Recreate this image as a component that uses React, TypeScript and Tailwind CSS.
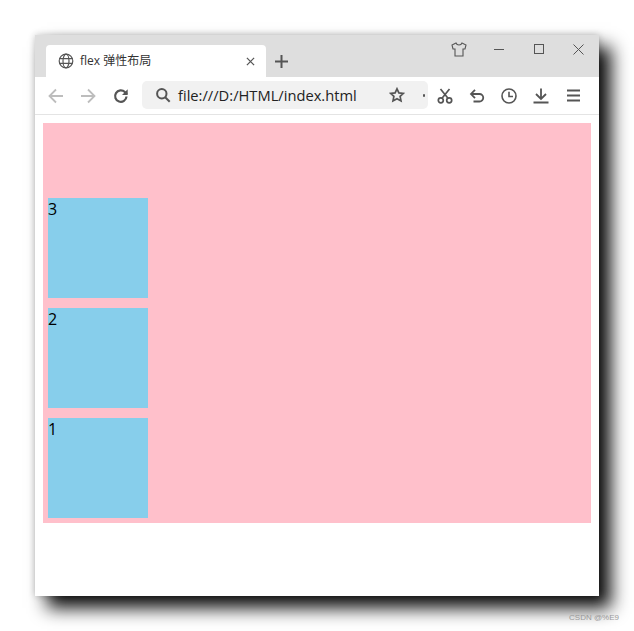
import React from "react";

const Ic = ({ w = 24, h = 24, vb = "0 0 24 24", sw = 2, color = "#5a5a5a", children }: any) => (
  <svg width={w} height={h} viewBox={vb} fill="none" stroke={color} strokeWidth={sw} strokeLinecap="butt" strokeLinejoin="miter" className="shrink-0">
    {children}
  </svg>
);

const Box = ({ n }: { n: number }) => (
  <div className="w-[100px] h-[100px] bg-[#87ceeb] text-black text-[16px] leading-[22px]">{n}</div>
);

export default function App() {
  return (
    <div className="relative w-[634px] h-[631px] bg-white overflow-hidden pl-[35px] pt-[35px] font-['Open_Sans','Noto_Sans_CJK_SC',sans-serif]">
      <div className="w-[564px] h-[561px] bg-white flex flex-col shadow-[0_0_7px_rgba(0,0,0,0.22),12px_12px_17px_rgba(0,0,0,0.95)]">
        {/* Tab strip */}
        <div className="h-[42px] bg-[#dedede] flex items-end pl-[11px] shrink-0">
          <div className="w-[220px] h-[32px] bg-white rounded-t-[4px] flex items-center pl-[12px] pr-[11px]">
            <Ic w={16} h={16} vb="0 0 16 16" sw={1.2} color="#555">
              <circle cx="8" cy="8" r="6.800" />
              <ellipse cx="8" cy="8" rx="3" ry="6.800" />
              <path d="M1.400 5.600h13.200M1.400 10.400h13.200" />
            </Ic>
            <span className="ml-[6px] text-[12px] leading-[16px] text-[#333] whitespace-nowrap">flex 弹性布局</span>
            <span className="ml-auto">
              <Ic w={9} h={9} vb="0 0 10 10" sw={1.4} color="#555">
                <path d="M1 1l8 8M9 1l-8 8" />
              </Ic>
            </span>
          </div>
          <div className="ml-[9px] h-[32px] flex items-center">
            <Ic w={13} h={13} vb="0 0 13 13" sw={2} color="#555">
              <path d="M6.500 0v13M0 6.500h13" />
            </Ic>
          </div>
          <div className="ml-auto self-start flex items-center h-[28px] pr-[15px]">
            <Ic w={16} h={15} vb="0 0 16 15" sw={1.100} color="#555">
              <path d="M5 1L1 3l1 4h2V14h8V7h2l1-4-4-2c-.500 1.400-1.500 2-3 2S5.500 2.400 5 1z" />
            </Ic>
            <span className="ml-[27px]">
              <Ic w={10} h={10} vb="0 0 10 10" sw={1} color="#555"><path d="M0 5.500h10" /></Ic>
            </span>
            <span className="ml-[30px]">
              <Ic w={10} h={10} vb="0 0 10 10" sw={1} color="#555"><rect x="0.500" y="0.500" width="9" height="9" /></Ic>
            </span>
            <span className="ml-[29px]">
              <Ic w={11} h={11} vb="0 0 11 11" sw={1} color="#555"><path d="M0.500 0.500l10 10M10.500 0.500l-10 10" /></Ic>
            </span>
          </div>
        </div>
        {/* Toolbar */}
        <div className="h-[38px] border-b border-[#e4e4e4] flex items-center shrink-0 pl-[12px] relative overflow-hidden">
          <Ic w={18} h={18} vb="0 0 18 18" sw={1.800} color="#bdbdbd"><path d="M16 9H2.500M9 2.500L2.500 9 9 15.500" /></Ic>
          <span className="ml-[14px]">
            <Ic w={18} h={18} vb="0 0 18 18" sw={1.800} color="#bdbdbd"><path d="M2 9h13.500M9 2.500L15.500 9 9 15.500" /></Ic>
          </span>
          <span className="ml-[15px]">
            <Ic w={18} h={18} vb="0 0 18 18" sw={2.200} color="#555">
              <path d="M14.500 9.500a5.700 5.700 0 1 1-1.600-4.400L15 7" />
              <path d="M15.700 2.200v5.700H10" fill="#555" stroke="none" />
            </Ic>
          </span>
          <div className="ml-[12px] w-[286px] h-[28px] -mt-[1px] bg-[#f1f1f1] rounded-[5px] flex items-center pl-[13px] shrink-0">
            <Ic w={16} h={16} vb="0 0 16 16" sw={2} color="#555">
              <circle cx="6.800" cy="6.800" r="4.700" />
              <path d="M10.200 10.200l4.500 4.500" />
            </Ic>
            <span className="ml-[7px] text-[14.7px] leading-[20px] text-[#222] whitespace-nowrap">file:///D:/HTML/index.html</span>
            <span className="ml-auto mr-[23px]">
              <Ic w={16} h={16} vb="0 0 16 16" sw={1.700} color="#555">
                <path d="M8 1.800l1.900 4.100 4.500.500-3.300 3 .900 4.500L8 11.700l-4 2.200.900-4.500-3.300-3 4.500-.500z" />
              </Ic>
            </span>
          </div>
          <div className="w-[2px] h-[3px] rounded-full bg-[#555] -ml-[5px] shrink-0" />
          <span className="ml-[12px]">
            <Ic w={16} h={16} vb="0 0 16 16" sw={1.700} color="#555">
              <circle cx="3.800" cy="12.300" r="2.500" />
              <circle cx="12.200" cy="12.300" r="2.500" />
              <path d="M5 10.200L12.500 1M11 10.200L3.500 1" />
            </Ic>
          </span>
          <span className="ml-[16px]">
            <Ic w={16} h={16} vb="0 0 16 16" sw={1.800} color="#555">
              <path d="M2.500 6h8a3.700 3.700 0 0 1 0 7.500H4.500" />
              <path d="M6 1.800L2 6l4 4.200" />
            </Ic>
          </span>
          <span className="ml-[16px]">
            <Ic w={16} h={16} vb="0 0 16 16" sw={1.600} color="#555">
              <circle cx="8" cy="8" r="7" />
              <path d="M8 3.700V8.500h4" />
            </Ic>
          </span>
          <span className="ml-[16px]">
            <Ic w={16} h={16} vb="0 0 16 16" sw={1.800} color="#555">
              <path d="M8 0.500v10M3 6l5 5 5-5M0.500 14.500h15" />
            </Ic>
          </span>
          <span className="ml-[18px]">
            <Ic w={13} h={13} vb="0 0 13 13" sw={1.800} color="#555">
              <path d="M0 1.500h13M0 6.500h13M0 11.500h13" />
            </Ic>
          </span>
        </div>
        {/* Page */}
        <div className="flex-1 pl-[8px] pt-[8px]">
          <div className="w-[548px] h-[400px] bg-[#ffc0cb] flex flex-col-reverse gap-[10px] p-[5px]">
            <Box n={1} />
            <Box n={2} />
            <Box n={3} />
          </div>
        </div>
      </div>
      <div className="absolute right-[15px] bottom-[9px] text-[8px] leading-[9px] tracking-[0px] text-[#999] font-['Liberation_Sans',sans-serif]">
        CSDN @%E9
      </div>
    </div>
  );
}
